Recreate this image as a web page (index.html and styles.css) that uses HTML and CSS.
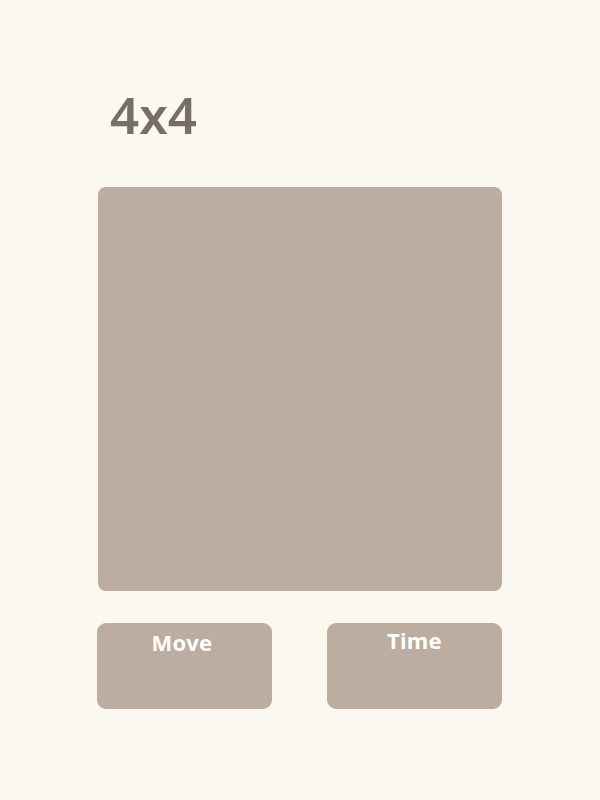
FILE: index.html
```html
<!DOCTYPE html>
<html>
<head>
<meta charset="utf-8">
<link rel="stylesheet" href="styles.css">
</head>
<body>
<div class="wrap">
  <h1 class="title">4x4</h1>
  <div class="board"></div>
  <div class="stats">
    <div class="stat stat-move">Move</div>
    <div class="stat stat-time">Time</div>
  </div>
</div>
</body>
</html>
```
FILE: styles.css
```css
html, body {
  margin: 0;
  padding: 0;
  background: #faf8ef;
}
body {
  font-family: "Noto Sans", "Open Sans", sans-serif;
  height: 800px;
}
.wrap {
  width: 404px;
  margin-left: 98px;
  padding-top: 80px;
}
.title {
  margin: 0;
  padding-left: 12px;
  font-size: 51px;
  font-weight: 600;
  line-height: 68px;
  color: #776e65;
  height: 107px;
}
.board {
  width: 404px;
  height: 404px;
  background: #bbada0;
  border-radius: 8px;
}
.stats {
  display: flex;
  justify-content: space-between;
  margin-top: 32px;
  margin-left: -1px;
}
.stat {
  width: 175px;
  height: 86px;
  background: #bbada0;
  border-radius: 9px;
  color: #fff;
  font-weight: 700;
  font-size: 22px;
  letter-spacing: 0.3px;
  text-align: center;
  box-sizing: border-box;
  padding-top: 4px;
}
.stat-move {
  padding-right: 5px;
}
.stat-time {
  padding-top: 2px;
}
```
